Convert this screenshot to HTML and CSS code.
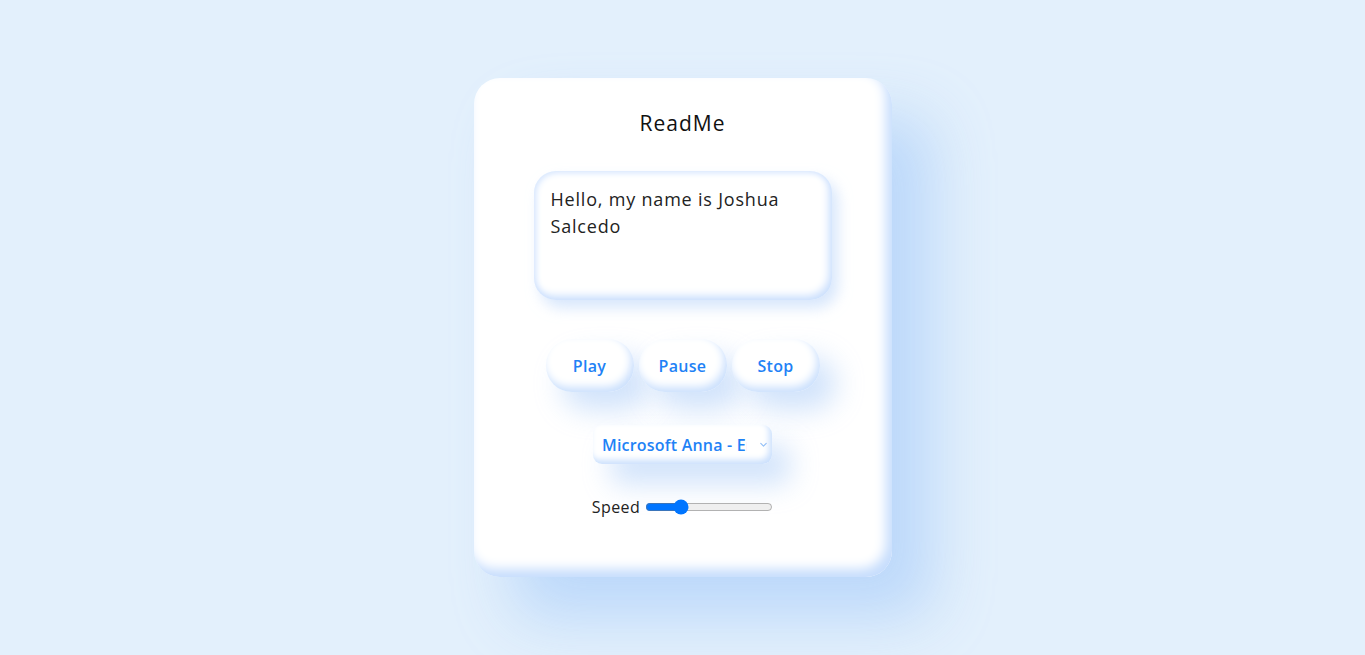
FILE: index.html
```html
<!DOCTYPE html>
<html lang="en">
<head>
<meta charset="utf-8">
<title>ReadMe</title>
<link rel="stylesheet" href="styles.css">
</head>
<body>
<main class="card">
  <h1 class="title">ReadMe</h1>
  <textarea class="text" spellcheck="false">Hello, my name is Joshua Salcedo</textarea>
  <div class="buttons">
    <button class="btn">Play</button>
    <button class="btn">Pause</button>
    <button class="btn">Stop</button>
  </div>
  <div class="voice">
    <select class="voice-select">
      <option>Microsoft Anna - English (United States)</option>
    </select>
    <svg class="chev" width="9" height="6" viewBox="0 0 9 6"><path d="M1 1l3.5 3.5L8 1" fill="none" stroke="#8fbdf7" stroke-width="1.4" stroke-linecap="round" stroke-linejoin="round"/></svg>
  </div>
  <label class="speed">Speed <input type="range" min="0.5" max="2.5" step="0.1" value="1"></label>
</main>
</body>
</html>
```

FILE: styles.css
```css
* { box-sizing: border-box; }
html, body { margin: 0; height: 100%; }
body {
  background: #e3f0fc;
  font-family: "Open Sans", "Liberation Sans", sans-serif;
  display: flex;
  align-items: center;
  justify-content: center;
  overflow: hidden;
}
.card {
  width: 418px;
  height: 499px;
  background: #fff;
  border-radius: 26px;
  padding: 30px 0 0;
  display: flex;
  flex-direction: column;
  align-items: center;
  box-shadow: inset -6px -8px 12px #c6ddfd, 40px 40px 60px rgba(175, 208, 250, 0.75);
}
.title {
  margin: 0;
  font-size: 21px;
  line-height: 30px;
  font-weight: 500;
  letter-spacing: 1px;
  color: #111;
}
.text {
  margin-top: 33px;
  width: 298px;
  height: 129px;
  border: none;
  outline: none;
  resize: none;
  border-radius: 22px;
  padding: 15px 16px 15px 17px;
  font-family: inherit;
  font-size: 18px;
  letter-spacing: 0.8px;
  line-height: 27px;
  color: #222;
  background: #fff;
  box-shadow: inset -3px -4px 8px #c9defd, inset 2px 2px 6px #dbe9fe, 6px 8px 14px rgba(190, 215, 250, 0.6);
}
.buttons {
  margin-top: 39px;
  display: flex;
  gap: 5px;
}
.btn {
  width: 88px;
  height: 53px;
  border: none;
  border-radius: 26px;
  background: #fff;
  font-family: inherit;
  font-size: 16px;
  font-weight: 600;
  letter-spacing: 0.3px;
  color: #1f82f6;
  box-shadow: inset -3px -5px 8px #cbe0fd, 16px 18px 28px rgba(190, 215, 250, 0.7);
  cursor: pointer;
}
.voice {
  margin-top: 33px;
  width: 179px;
  height: 39px;
  border-radius: 9px;
  background: #fff;
  display: flex;
  align-items: center;
  padding: 0 5px 0 9px;
  box-shadow: inset -3px -4px 6px #cbe0fd, 18px 20px 28px rgba(190, 215, 250, 0.7);
}
.voice-select {
  appearance: none;
  -webkit-appearance: none;
  border: none;
  outline: none;
  background: transparent;
  width: 145px;
  padding: 0;
  font-family: inherit;
  font-size: 16px;
  font-weight: 600;
  letter-spacing: 0.2px;
  color: #1f82f6;
}
.chev { margin-left: 13px; }
.speed {
  margin-top: 32px;
  display: flex;
  align-items: center;
  gap: 5px;
  font-size: 16px;
  letter-spacing: 0.4px;
  color: #222;
}
.speed input { margin: 0; width: 128px; }
```
